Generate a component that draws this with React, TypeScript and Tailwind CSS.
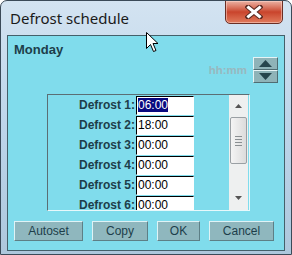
import React from "react";

const rows = [
  ["Defrost 1:", "06:00"],
  ["Defrost 2:", "18:00"],
  ["Defrost 3:", "00:00"],
  ["Defrost 4:", "00:00"],
  ["Defrost 5:", "00:00"],
  ["Defrost 6:", "00:00"],
];

export default function App() {
  return (
    <div
      className="relative w-[292px] h-[255px] overflow-hidden rounded-t-[7px] border border-[#3b4a58] bg-gradient-to-b from-[#d3e3f1] via-[#bdd5ea] to-[#adc7dc]"
      style={{ fontFamily: '"Liberation Sans", Arial, sans-serif' }}
    >
      {/* Title bar */}
      <div className="flex h-[34px] items-start">
        <div
          className="pl-[9px] pt-[7px] text-[15px] leading-[20px] text-[#1a1a1a]"
          style={{ fontFamily: '"Noto Sans", "Open Sans", sans-serif' }}
        >
          Defrost schedule
        </div>
        <div className="ml-auto mr-[8px] mt-[-1px] flex h-[24px] w-[58px] items-center justify-center rounded-b-[5px] border border-[#6a2e24] bg-gradient-to-b from-[#eab1a3] via-[#c9442c] to-[#e07a5c] shadow-[inset_0_0_0_1px_rgba(255,220,210,0.5)]">
          <svg width="18" height="14" viewBox="0 0 18 14">
            <path d="M3 2 L15 12 M15 2 L3 12" stroke="#5a2a22" strokeWidth="5" strokeLinecap="square" />
            <path d="M3.5 2.5 L14.5 11.5 M14.5 2.5 L3.5 11.5" stroke="#ffffff" strokeWidth="3" strokeLinecap="square" />
          </svg>
        </div>
      </div>

      {/* Content panel */}
      <div className="mx-[6px] flex h-[216px] flex-col border border-[#44606a] bg-[#80dcec]">
        <div className="mt-[6px] pl-[6px] text-[13px] font-bold leading-[15px] text-[#1d3e4a]">Monday</div>

        <div className="flex items-center justify-end pr-[6px]">
          <span className="mr-[6px] mt-[1px] text-[11.5px] font-bold text-[#98b8bf]">hh:mm</span>
          <div className="flex flex-col">
            <div className="flex h-[13px] w-[25px] items-center justify-center border-t border-l border-[#e6f4f6] border-r border-b border-r-[#4f6c72] border-b-[#4f6c72] bg-[#8fb3b8]">
              <svg width="13" height="7" viewBox="0 0 13 7"><path d="M6.5 0 L13 7 L0 7 Z" fill="#26454d" /></svg>
            </div>
            <div className="flex h-[13px] w-[25px] items-center justify-center border-t border-l border-[#e6f4f6] border-r border-b border-r-[#4f6c72] border-b-[#4f6c72] bg-[#8fb3b8]">
              <svg width="13" height="7" viewBox="0 0 13 7"><path d="M0 0 L13 0 L6.5 7 Z" fill="#26454d" /></svg>
            </div>
          </div>
        </div>

        {/* List */}
        <div className="ml-[39px] mt-[11px] flex h-[117px] w-[203px] border-t border-l border-[#5b6e74] border-b border-r border-b-[#e8f8fb] border-r-[#e8f8fb]">
          <div className="flex-1 overflow-hidden pt-[1px]">
            {rows.map(([label, value], i) => (
              <div key={label} className="flex h-[20px]">
                <div className="w-[88px] pr-[1px] text-right text-[12px] font-bold leading-[19px] text-[#1d3e4a]">{label}</div>
                <div className="h-[19px] w-[58px] border-t border-l border-black border-b border-r border-b-white border-r-white bg-white pl-[1px] text-[12px] leading-[17px] text-black">
                  {i === 0 ? <span className="bg-[#0a0a80] text-white">{value}</span> : value}
                </div>
              </div>
            ))}
          </div>
          <div className="mr-[1px] flex w-[19px] flex-col items-center bg-[#eef0f0]">
            <div className="flex h-[20px] items-center justify-center pt-[2px]">
              <svg width="7" height="4" viewBox="0 0 7 4"><path d="M3.5 0 L7 4 L0 4 Z" fill="#555" /></svg>
            </div>
            <div className="mt-[2px] flex h-[47px] w-[17px] items-center justify-center rounded-[2px] border border-[#9aa0a4] bg-gradient-to-r from-[#f4f4f4] to-[#dcdcdc]">
              <div className="flex flex-col gap-[2px]">
                <div className="h-[1px] w-[7px] bg-[#8a8f92]" />
                <div className="h-[1px] w-[7px] bg-[#8a8f92]" />
                <div className="h-[1px] w-[7px] bg-[#8a8f92]" />
                <div className="h-[1px] w-[7px] bg-[#8a8f92]" />
              </div>
            </div>
            <div className="mt-auto flex h-[20px] items-center justify-center pb-[4px]">
              <svg width="7" height="4" viewBox="0 0 7 4"><path d="M0 0 L7 0 L3.5 4 Z" fill="#555" /></svg>
            </div>
          </div>
        </div>

        {/* Buttons */}
        <div className="mt-[10px] flex gap-[9px] pl-[6px]">
          {[
            ["Autoset", "w-[69px]"],
            ["Copy", "w-[56px]"],
            ["OK", "w-[43px]"],
            ["Cancel", "w-[65px]"],
          ].map(([t, w]) => (
            <div
              key={t}
              className={`${w} flex h-[20px] items-center justify-center border-t border-l border-[#dff3f6] border-r border-b border-r-[#5d7f86] border-b-[#5d7f86] bg-[#8fb7be] text-[12px] text-[#1d3e4a]`}
            >
              {t}
            </div>
          ))}
        </div>
      </div>

      {/* Mouse cursor */}
      <svg className="absolute left-[145px] top-[31px]" width="13" height="21" viewBox="0 0 13 21">
        <path d="M0.5 0.5 L0.5 16.5 L4.5 12.5 L7.5 19.5 L10 18.5 L7 11.5 L12 11.5 Z" fill="white" stroke="black" strokeWidth="1" />
      </svg>
    </div>
  );
}
